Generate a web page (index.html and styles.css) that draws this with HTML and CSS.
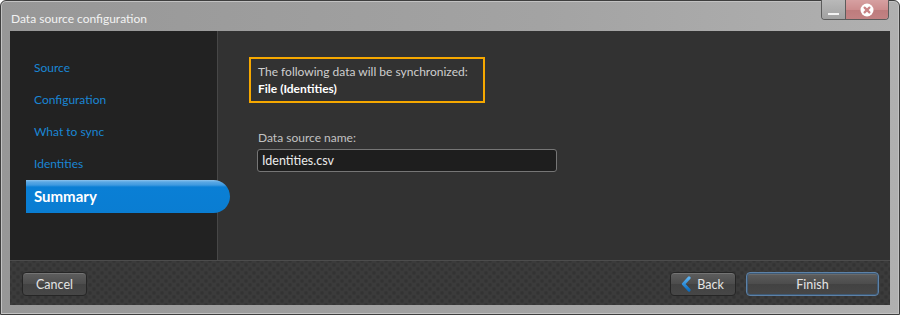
FILE: index.html
```html
<!DOCTYPE html>
<html>
<head>
<meta charset="utf-8">
<link rel="stylesheet" href="styles.css">
</head>
<body>
<div class="window">
  <div class="titlebar">
    <span class="title">Data source configuration</span>
    <div class="controls">
      <div class="btn-min"><span class="dash"></span></div>
      <div class="btn-close">
        <svg width="14" height="14" viewBox="0 0 14 14"><circle cx="7" cy="7" r="6.5" fill="#fff"/><path d="M4.6 4.6 L9.4 9.4 M9.4 4.6 L4.6 9.4" stroke="#c98486" stroke-width="2.2" stroke-linecap="round"/></svg>
      </div>
    </div>
  </div>
  <div class="client">
    <div class="main">
      <nav class="nav">
        <div class="nav-item">Source</div>
        <div class="nav-item">Configuration</div>
        <div class="nav-item">What to sync</div>
        <div class="nav-item">Identities</div>
        <div class="nav-item active">Summary</div>
      </nav>
      <section class="content">
        <div class="notice">
          <div class="notice-line">The following data will be synchronized:</div>
          <div class="notice-line strong">File (Identities)</div>
        </div>
        <div class="field-label">Data source name:</div>
        <div class="field-input">Identities.csv</div>
      </section>
    </div>
    <footer class="footer">
      <button class="btn btn-cancel">Cancel</button>
      <div class="spacer"></div>
      <button class="btn btn-back"><svg class="chev" width="12" height="16" viewBox="0 0 12 16"><defs><linearGradient id="cg" x1="0" y1="0" x2="0" y2="1"><stop offset="0" stop-color="#5cb2f0"/><stop offset="1" stop-color="#0a6fc4"/></linearGradient></defs><path d="M9 2 L3.5 8 L9 14" fill="none" stroke="url(#cg)" stroke-width="3.2" stroke-linecap="round" stroke-linejoin="round"/></svg><span>Back</span></button>
      <button class="btn btn-finish">Finish</button>
    </footer>
  </div>
</div>
</body>
</html>
```
FILE: styles.css
```css
html, body {
  margin: 0;
  padding: 0;
  background: #ffffff;
}
body {
  width: 900px;
  height: 315px;
  overflow: hidden;
  font-family: Lato, "Liberation Sans", sans-serif;
}
.window {
  box-sizing: border-box;
  width: 900px;
  height: 315px;
  border: 1px solid #3e3e3e;
  border-radius: 6px 6px 0 0;
  background: linear-gradient(to right, #979797 0%, #a3a3a3 60%, #b0b0b0 100%);
  box-shadow: inset 0 0 0 1px #c2c2c2;
  display: flex;
  flex-direction: column;
}
.titlebar {
  height: 30px;
  display: flex;
  align-items: flex-start;
  padding-left: 10px;
  padding-right: 10px;
}
.title {
  color: #f2f2f2;
  font-size: 12px;
  line-height: 14px;
  margin-top: 11px;
}
.controls {
  margin-left: auto;
  margin-top: -1px;
  display: flex;
  height: 19px;
  border: 1px solid #5c5c5c;
  border-top: none;
  border-radius: 0 0 4px 4px;
  overflow: hidden;
}
.btn-min {
  width: 23px;
  height: 19px;
  background: linear-gradient(#b9b9b9, #a1a1a1);
  border-right: 1px solid #5c5c5c;
  display: flex;
  justify-content: center;
  align-items: flex-end;
}
.dash {
  width: 11px;
  height: 2px;
  background: #f2f2f2;
  margin-bottom: 4px;
}
.btn-close {
  width: 42px;
  height: 19px;
  background: linear-gradient(#d6a0a1 0%, #cc8d8e 50%, #bd7c7d 51%, #c28283 100%);
  display: flex;
  justify-content: center;
  align-items: center;
}
.client {
  margin: 0 9px;
  height: 274px;
  display: flex;
  flex-direction: column;
  background: #333333;
}
.main {
  height: 229px;
  display: flex;
}
.nav {
  width: 207px;
  background: #222222;
  border-right: 1px solid #474747;
  padding-top: 21px;
  box-sizing: content-box;
}
.nav-item {
  height: 32px;
  line-height: 32px;
  padding-left: 24px;
  color: #1a86d4;
  font-size: 12px;
}
.nav-item.active {
  position: relative;
  z-index: 1;
  height: 33px;
  line-height: 33px;
  margin-left: 16px;
  margin-right: -13px;
  padding-left: 8px;
  color: #ffffff;
  font-weight: bold;
  font-size: 15px;
  border-radius: 0 17px 17px 0;
  background: linear-gradient(#8cc3ee 0px, #5aa8e4 2px, #3f9ae0 5px, #0a7fd5 7px, #0a7dd2 100%);
}
.content {
  flex: 1;
  background: #323232;
  padding-left: 31px;
  padding-top: 26px;
}
.notice {
  border: 2px solid #f6a800;
  padding: 4px 0 0 7px;
  box-sizing: border-box;
  width: 236px;
  height: 46px;
}
.notice-line {
  color: #cfcfcf;
  font-size: 12px;
  line-height: 17px;
}
.notice-line.strong {
  color: #ffffff;
  font-weight: bold;
}
.field-label {
  margin-top: 26px;
  margin-left: 9px;
  color: #c2c2c2;
  font-size: 12px;
  line-height: 17px;
}
.field-input {
  margin-top: 3px;
  margin-left: 8px;
  box-sizing: border-box;
  width: 300px;
  height: 23px;
  border: 1px solid #767676;
  border-radius: 3px;
  background: #1e1e1e;
  color: #ececec;
  font-size: 12.5px;
  line-height: 21px;
  padding-left: 4px;
}
.footer {
  flex: 1;
  border-top: 1px solid #4c4c4c;
  background-color: #3b3b3b;
  background-image:
    radial-gradient(circle, #333333 1.2px, transparent 2.4px),
    radial-gradient(circle, #333333 1.2px, transparent 2.4px);
  background-size: 8px 8px;
  background-position: 0 0, 4px 4px;
  display: flex;
  align-items: flex-start;
  padding: 11px 11px 0 12px;
}
.spacer {
  flex: 1;
}
.btn {
  box-sizing: border-box;
  height: 24px;
  border: 1px solid #252525;
  border-radius: 4px;
  background: linear-gradient(#5e5e5e 0%, #4c4c4c 50%, #424242 51%, #474747 100%);
  box-shadow: inset 0 1px 0 #747474;
  color: #e4e4e4;
  font-family: Lato, "Liberation Sans", sans-serif;
  font-size: 12.5px;
  padding: 0;
  display: flex;
  align-items: center;
  justify-content: center;
}
.btn-cancel {
  width: 65px;
}
.btn-back {
  width: 66px;
  gap: 5px;
  padding-right: 2px;
}
.chev {
  display: block;
}
.btn-finish {
  width: 133px;
  margin-left: 10px;
  border: 1px solid #5d82a8;
  box-shadow: inset 0 0 0 1px #3f5a75, inset 0 2px 0 #6a6a6a;
}
```
